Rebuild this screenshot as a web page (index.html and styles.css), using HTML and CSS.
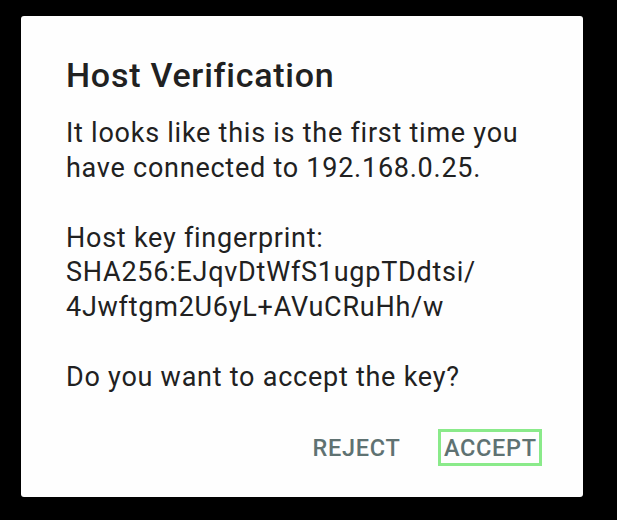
FILE: index.html
```html
<!DOCTYPE html>
<html lang="en">
<head>
<meta charset="utf-8">
<title>Host Verification</title>
<link rel="stylesheet" href="styles.css">
</head>
<body>
<div class="dialog">
  <h1 class="title">Host Verification</h1>
  <div class="message">
    <p>It looks like this is the first time you<br>have connected to 192.168.0.25.</p>
    <p>Host key fingerprint:<br>SHA256:EJqvDtWfS1ugpTDdtsi/<br>4Jwftgm2U6yL+AVuCRuHh/w</p>
    <p>Do you want to accept the key?</p>
  </div>
  <div class="actions">
    <button class="btn">REJECT</button>
    <button class="btn btn-focus">ACCEPT</button>
  </div>
</div>
</body>
</html>
```

FILE: styles.css
```css
html, body {
  margin: 0;
  padding: 0;
  background: #000;
  height: 100%;
}
body {
  padding: 16px 0 0 21px;
  box-sizing: border-box;
  font-family: Roboto, "Noto Sans", sans-serif;
}
.dialog {
  width: 562px;
  height: 481px;
  box-sizing: border-box;
  background: #fefefe;
  border-radius: 3px;
  padding: 39px 0 0 45px;
  display: flex;
  flex-direction: column;
}
.title {
  margin: 0;
  font-size: 34px;
  line-height: 40px;
  font-weight: 500;
  letter-spacing: 0.75px;
  color: #212121;
}
.message {
  margin-top: 21.3px;
  font-size: 27px;
  line-height: 34.8px;
  letter-spacing: 0.75px;
  color: #212121;
}
.message p {
  margin: 0;
}
.message p + p {
  margin-top: 34.8px;
}
.actions {
  display: flex;
  justify-content: flex-end;
  gap: 32px;
  margin-top: 33.9px;
  padding-right: 40.7px;
}
.btn {
  font-family: Roboto, "Noto Sans", sans-serif;
  font-size: 23.5px;
  font-weight: 500;
  line-height: 29px;
  letter-spacing: 0.7px;
  color: #5f7272;
  background: transparent;
  border: 3px solid transparent;
  padding: 2px 2.5px 0 3px;
  margin: 0;
}
.btn-focus {
  border-color: #8aea8a;
}
```
